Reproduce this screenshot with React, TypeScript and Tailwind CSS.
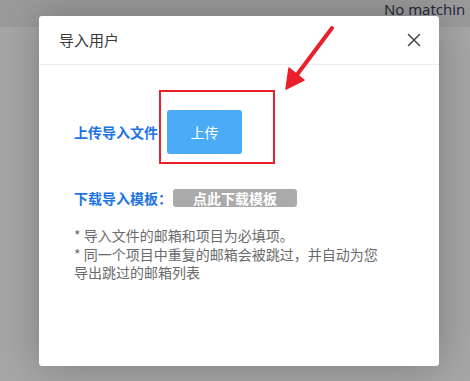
import React from 'react'

const cjk = { fontFamily: '"Noto Sans CJK SC", "Noto Sans", sans-serif' }

function CloseIcon() {
  return (
    <svg width="14" height="14" viewBox="0 0 14 14" fill="none" stroke="#4a4a4a" strokeWidth="1.6" strokeLinecap="round">
      <path d="M1.5 1.5 L12.5 12.5 M12.5 1.5 L1.5 12.5" />
    </svg>
  )
}

// red annotation arrow drawn over the dialog
function Arrow() {
  return (
    <svg className="absolute left-0 top-0 pointer-events-none" width="470" height="381" viewBox="0 0 470 381">
      <path d="M332 28 L296 76" stroke="#ea1f29" strokeWidth="4" strokeLinecap="round" fill="none" />
      <path d="M286 89 L289 68 L304 80 Z" fill="#ea1f29" stroke="#ea1f29" strokeWidth="1.5" strokeLinejoin="round" />
    </svg>
  )
}

const App: React.FC = () => {
  return (
    <div className="relative w-[470px] h-[381px] overflow-hidden bg-white" style={cjk}>
      {/* page behind the overlay */}
      <div className="h-[27px] bg-[#eeeeee] flex items-start pl-[384px]">
        <span
          className="text-[15px] leading-[19px] text-[#2e3a58] whitespace-nowrap"
          style={{ fontFamily: '"Open Sans", "Noto Sans", sans-serif' }}
        >
          No matchin
        </span>
      </div>
      <div className="absolute inset-0 bg-black/35" />

      {/* dialog */}
      <div className="absolute left-[39px] top-[16px] w-[400px] h-[350px] bg-white rounded-[3px] shadow-[0_0_40px_rgba(0,0,0,0.25)]">
        <div className="h-[49px] flex items-center justify-between pl-[20px] pr-[18px] border-b border-[#ececec]">
          <span className="text-[15px] text-[#3a3a3a]">导入用户</span>
          <CloseIcon />
        </div>

        <div className="pl-[35px] pr-[50px] pt-[45px]">
          <div className="relative flex items-center">
            <span className="text-[14px] font-bold text-[#1d74e4]">上传导入文件</span>
            <button className="ml-[9px] w-[75px] h-[44px] rounded-[3px] bg-[#4aacf6] text-white text-[14px]">
              上传
            </button>
            <div className="absolute left-[85px] top-[-20px] w-[116px] h-[74px] border-2 border-[#ea1f29]" />
          </div>

          <div className="flex items-center mt-[34px] h-[20px]">
            <span className="text-[14px] font-bold text-[#1d74e4]">下载导入模板：</span>
            <button className="ml-[1px] w-[124px] h-[18px] rounded-[3px] bg-[#aaaaaa] text-white text-[14px] font-bold leading-[18px]">
              点此下载模板
            </button>
          </div>

          <div className="mt-[18px] text-[14px] leading-[18.5px] text-[#6b6b6b]">
            <p>* 导入文件的邮箱和项目为必填项。</p>
            <p>* 同一个项目中重复的邮箱会被跳过，并自动为您导出跳过的邮箱列表</p>
          </div>
        </div>
      </div>

      <Arrow />
    </div>
  )
}

export default App
